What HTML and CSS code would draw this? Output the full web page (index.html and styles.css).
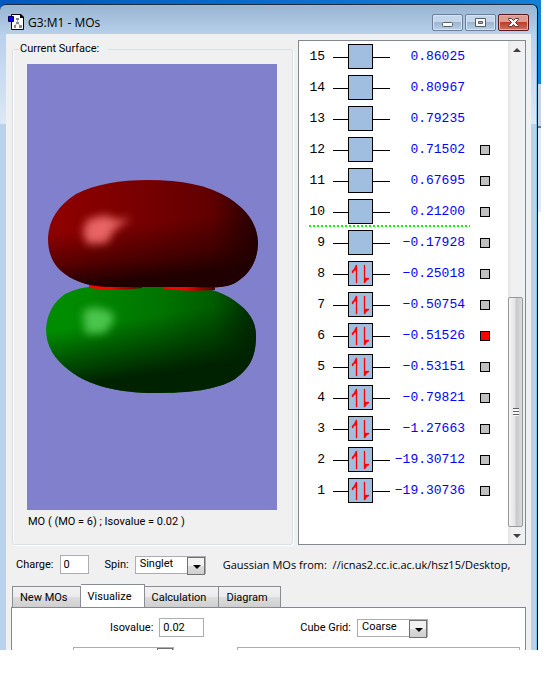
FILE: index.html
```
<!DOCTYPE html>
<html lang="en">
<head>
  <meta charset="UTF-8" />
  <meta name="viewport" content="width=device-width, initial-scale=1" />
  <title>G3:M1 - MOs</title>
  <link rel="stylesheet" href="styles.css">
</head>
<body>
  <div class="desktop">
    <main class="window">
      <header class="titlebar">
        <svg class="app-icon" width="16" height="16" viewBox="0 0 16 16" aria-hidden="true">
          <path d="M3.500.500h9l3 3v12h-12z" fill="#fff" stroke="#000"/>
          <path d="M12 0h1l3 3v1h-4z" fill="#000"/>
          <path d="M9.500 5v4l-3 3M9.500 9l3 3" stroke="#aaa" fill="none"/>
          <path d="M8 4h3v2H8zM8 8h3v2H8zM6 11h2v3H6zM11 11h3v3h-3z" fill="#888"/>
          <path d="M.5 2.500h5v5h-5z" fill="#00f" stroke="#000060"/>
        </svg>
        <h1>G3:M1 - MOs</h1>
        <div class="window-buttons">
          <button class="win-btn" aria-label="Minimize">
            <svg width="13" height="11" viewBox="0 0 13 11"><rect x="1.500" y="5.500" width="10" height="4" rx="1" fill="#fff" stroke="#555b68"/></svg>
          </button>
          <button class="win-btn" aria-label="Maximize">
            <svg width="13" height="11" viewBox="0 0 13 11"><path d="M1.500 1.500h10v8h-10zM4.500 4.500v2h4v-2z" fill="#fff" fill-rule="evenodd" stroke="#555b68"/></svg>
          </button>
          <button class="win-btn close" aria-label="Close">
            <svg width="13" height="11" viewBox="0 0 13 11"><path d="M1.500 1.500h3l2 2 2-2h3v1l-3 3 3 3v1h-3l-2-2-2 2h-3v-1l3-3-3-3z" fill="#fff" stroke="#5a3038"/></svg>
          </button>
        </div>
      </header>

      <div class="client">
        <div class="panels">
          <fieldset class="surface">
            <legend>Current Surface:</legend>
            <svg class="canvas" viewBox="0 0 250 446" preserveAspectRatio="none" role="img" aria-label="Molecular orbital 6">
              <defs>
                <path id="redLobe" d="M21 174c1-19 10-32 28-44 20-10 44-14 72-14 34 0 60 5 81 18 18 12 28 25 29 44 0 18-8 32-23 41-12 6-28 4-46 4H86c-20 0-36-4-48-13-11-8-17-19-17-36z"/>
                <path id="greenLobe" d="M19 265c1-16 8-27 19-35 18-9 40-9 60-8h55c22 0 42 5 55 15 14 10 21 20 21 35 0 24-9 34-21 43-18 11-46 14-79 14-40 0-68-8-86-22-16-12-24-25-24-42z"/>
                <linearGradient id="redBase">
                  <stop offset="0.1" stop-color="#8c0000"/>
                  <stop offset="0.5" stop-color="#740000"/>
                  <stop offset="0.78" stop-color="#600000"/>
                  <stop offset="1" stop-color="#240000"/>
                </linearGradient>
                <linearGradient id="redFoot" x1="0.4" y1="0" x2="0.6" y2="1">
                  <stop offset="0.4" stop-color="#200000" stop-opacity="0"/>
                  <stop offset="0.7" stop-color="#200000" stop-opacity="0.5"/>
                  <stop offset="0.9" stop-color="#200000"/>
                </linearGradient>
                <linearGradient id="greenBase">
                  <stop offset="0.1" stop-color="#008c00"/>
                  <stop offset="0.55" stop-color="#007400"/>
                  <stop offset="0.8" stop-color="#005c00"/>
                  <stop offset="1" stop-color="#002800"/>
                </linearGradient>
                <linearGradient id="greenFoot" x1="0.35" y1="0" x2="0.65" y2="1">
                  <stop offset="0.3" stop-color="#002200" stop-opacity="0"/>
                  <stop offset="0.6" stop-color="#002200" stop-opacity="0.6"/>
                  <stop offset="0.8" stop-color="#002200"/>
                </linearGradient>
                <linearGradient id="neck">
                  <stop offset="0.4" stop-color="#f00"/>
                  <stop offset="1" stop-color="#500000"/>
                </linearGradient>
                <filter id="soft" x="-40%" y="-40%" width="180%" height="180%">
                  <feGaussianBlur stdDeviation="4"/>
                </filter>
              </defs>
              <rect width="250" height="446" fill="#8080cc"/>
              <use href="#greenLobe" fill="url(#greenBase)"/>
              <use href="#greenLobe" fill="url(#greenFoot)"/>
              <path d="M56 247l12-4 17 5 2 8-9 13-19 1-2-10z" fill="#4cc44c" filter="url(#soft)"/>
              <path d="M62 220h53v4q-26 3-53 0z" fill="url(#neck)"/>
              <path d="M137 222h51v4q-26 2-51-1z" fill="url(#neck)"/>
              <use href="#redLobe" fill="url(#redBase)"/>
              <use href="#redLobe" fill="url(#redFoot)"/>
              <path d="M60 156l18-5 12 5 14-2-17 12-7 13-20 1-4-12z" fill="#e86464" filter="url(#soft)"/>
            </svg>
            <p class="caption">MO ( (MO = 6) ; Isovalue = 0.02 )</p>
          </fieldset>

          <div class="orbitals">
            <div class="levels" id="levels"></div>
            <div class="scrollbar">
              <button class="arrow up" aria-label="Scroll up"></button>
              <div class="track">
                <div class="thumb"><span class="grip"></span></div>
              </div>
              <button class="arrow down" aria-label="Scroll down"></button>
            </div>
          </div>
        </div>

        <div class="settings">
          <label for="charge">Charge:</label>
          <input id="charge" class="field charge" type="text" value="0">
          <label for="spin">Spin:</label>
          <span class="combo">
            <select id="spin"><option>Singlet</option><option>Triplet</option></select>
          </span>
          <span class="source">Gaussian MOs from:&nbsp; //icnas2.cc.ic.ac.uk/hsz15/Desktop,</span>
        </div>

        <nav class="tabs">
          <button class="tab">New MOs</button>
          <button class="tab active">Visualize</button>
          <button class="tab">Calculation</button>
          <button class="tab">Diagram</button>
        </nav>

        <section class="tab-page">
          <div class="options">
            <div class="option">
              <label for="isovalue">Isovalue:</label>
              <input id="isovalue" class="field isovalue" type="text" value="0.02">
            </div>
            <div class="option">
              <label for="grid">Cube Grid:</label>
              <span class="combo">
                <select id="grid"><option>Coarse</option><option>Medium</option><option>Fine</option></select>
              </span>
            </div>
          </div>
          <div class="next-row">
            <div class="cut-combo"><span></span></div>
            <div class="cut-box"></div>
          </div>
        </section>
      </div>
    </main>
    <div class="behind"></div>
  </div>

  <script src="script.js"></script>
</body>
</html>
```
FILE: styles.css
```
* {
  box-sizing: border-box;
}

body {
  margin: 0;
  background: #fff;
  color: #000;
  font-family: Roboto, "Liberation Sans", sans-serif;
  font-size: 11px;
}

button, input, select {
  font: inherit;
  color: inherit;
  margin: 0;
  padding: 0;
  border-radius: 0;
}

.desktop {
  display: flex;
  margin-right: 7px;
  padding-top: 4px;
  background: linear-gradient(90deg, #0058c0, #1480d8);
}

.window {
  flex: 1;
  min-width: 0;
  padding: 0 6px;
  border-top: 1px solid #1c2a3c;
  border-right: 1px solid #000;
  border-radius: 6px 6px 0 0;
  background: linear-gradient(#98b4d2, #b9d1ea 30px, #dce8f5 119px, #b9d1ea 119px);
  box-shadow: inset -1px 1px 0 #7cc8ec;
}

.titlebar {
  display: flex;
  align-items: center;
  height: 29px;
  padding: 6px 2px 0;
}

.app-icon {
  margin-bottom: 2px;
}

h1 {
  flex: 1;
  margin: 0 0 0 4px;
  font-family: "Open Sans", "Noto Sans", sans-serif;
  font-size: 12px;
  font-weight: 400;
  line-height: 16px;
}

.window-buttons {
  display: flex;
  gap: 2px;
}

.win-btn {
  display: flex;
  align-items: center;
  justify-content: center;
  width: 31px;
  height: 17px;
  border: 1px solid #6c7f9c;
  border-radius: 2px;
  background: linear-gradient(#c4d6ea 50%, #9db6d2 50%, #b8cfe6);
  box-shadow: inset 0 0 0 1px #d4e4f4;
}

.win-btn.close {
  border-color: #571a20;
  background: linear-gradient(#dd9c90 45%, #bc3f28 50%, #d0705c);
  box-shadow: inset 0 0 0 1px #e8b0a4;
}

.client {
  padding: 6px 5px 0;
  background: #f0f0f0;
}

.panels {
  display: flex;
  gap: 5px;
}

.surface {
  flex: 1;
  min-width: 0;
  margin: 1px 0 0 1px;
  padding: 7px 15px 0 14px;
  border: 1px solid #d5dfe5;
  border-radius: 3px;
  box-shadow: inset 1px 0 0 #fff, 1px 1px 0 #fff;
}

legend {
  margin-left: -8px;
  padding: 0 9px 0 1px;
  line-height: 16px;
}

.canvas {
  display: block;
  width: 100%;
  height: 446px;
}

.caption {
  margin: 0;
  padding: 4px 1px 14px;
  line-height: 16px;
}

.orbitals {
  display: flex;
  width: 228px;
  border: 1px solid #828790;
  background: #fff;
}

.levels {
  flex: 1;
}

.level {
  display: grid;
  grid-template-columns: 26px 65px 75px 25px;
  align-items: center;
  justify-items: end;
  height: 31px;
  font-family: "Liberation Mono", "Courier New", monospace;
  font-size: 13px;
}

.level.lumo {
  position: relative;
}

/* dotted line between the bound and the unbound orbitals */
.level.lumo::before {
  content: '';
  position: absolute;
  top: -2px;
  left: 10px;
  width: 161px;
  height: 2px;
  background: repeating-linear-gradient(90deg, #0f0 0 2px, transparent 2px 4px);
}

.level .energy {
  color: #00f;
}

.level .box {
  display: block;
}

.level input {
  appearance: none;
  width: 10px;
  height: 10px;
  border: 1px solid #000;
  background: #c0c0c0;
}

.level input:checked {
  background: #f00;
}

.scrollbar {
  display: flex;
  flex-direction: column;
  width: 17px;
  background: linear-gradient(90deg, #e6e6e6, #f0f0f0 4px);
}

.arrow {
  display: flex;
  align-items: center;
  justify-content: center;
  height: 17px;
  border: 0;
  background: none;
}

.arrow::before {
  content: '';
  border: 4px solid transparent;
}

.arrow.up::before {
  border-top: 0;
  border-bottom-color: #404040;
}

.arrow.down::before {
  border-bottom: 0;
  border-top-color: #404040;
}

.track {
  display: flex;
  flex: 1;
  align-items: flex-end;
}

.thumb {
  display: flex;
  align-items: center;
  justify-content: center;
  width: 15px;
  height: 49%;
  border: 1px solid #979797;
  border-radius: 2px;
  background: linear-gradient(90deg, #f5f5f5, #e4e4e6 45%, #c8c8ca 55%, #dcdcde);
}

.grip {
  width: 6px;
  height: 8px;
  background: repeating-linear-gradient(#606060 0 1px, #f8f8f8 1px 3px);
}

.settings {
  display: flex;
  align-items: center;
  height: 39px;
  padding: 0 5px;
}

.field {
  height: 19px;
  padding-left: 3px;
  border: 1px solid #abadb3;
  background: #fff;
}

.charge {
  width: 29px;
  margin: 0 16px 0 6px;
}

.combo {
  position: relative;
  display: inline-block;
  width: 71px;
  height: 18px;
  border: 1px solid #abadb3;
  background: #fff;
}

.combo select {
  display: block;
  width: 100%;
  height: 14px;
  padding-left: 4px;
  border: 0;
  background: none;
  appearance: none;
}

.combo::before {
  content: '';
  position: absolute;
  top: 0;
  right: 0;
  width: 16px;
  height: 16px;
  border: 1px solid #707070;
  background: linear-gradient(#f2f2f2 50%, #dcdcdc 50%, #cfcfcf);
  pointer-events: none;
}

.combo::after {
  content: '';
  position: absolute;
  top: 8px;
  right: 4px;
  border: 4px solid transparent;
  border-top-color: #000;
  border-bottom: 0;
  pointer-events: none;
}

.settings .combo {
  flex: none;
  margin: 0 17px 0 6px;
}

.source {
  flex: 1;
  overflow: hidden;
  font-family: "Open Sans", "Noto Sans", sans-serif;
  line-height: 16px;
  white-space: nowrap;
}

.tabs {
  display: flex;
  align-items: flex-end;
  height: 23px;
  padding-left: 1px;
}

.tab {
  height: 21px;
  padding: 0 12px 0 7px;
  border: 1px solid #898c95;
  border-bottom: 0;
  background: linear-gradient(#f2f2f2, #ebebeb 50%, #dddddd 50%, #cfcfcf);
}

.tab + .tab {
  border-left: 0;
}

.tab.active {
  height: 23px;
  background: #fff;
}

.tab-page {
  padding: 10px 5px 0;
  border: 1px solid #828790;
  border-bottom: 0;
  background: #fff;
}

.options {
  display: flex;
  justify-content: space-between;
  padding: 0 92px 0 93px;
}

.option {
  display: flex;
  align-items: center;
  gap: 6px;
}

.isovalue {
  width: 45px;
}

/* only the top edge of the next row of controls is in view */
.next-row {
  display: flex;
  gap: 63px;
  height: 3px;
  margin-top: 10px;
  padding-left: 56px;
  overflow: hidden;
}

.cut-combo {
  display: flex;
  justify-content: flex-end;
  width: 101px;
  border: 1px solid #abadb3;
  border-bottom: 0;
}

.cut-combo span {
  width: 16px;
  border: 1px solid #707070;
  border-bottom: 0;
}

.cut-box {
  flex: 1;
  border: 1px solid #abadb3;
  border-bottom: 0;
}

.behind {
  width: 3px;
  margin-top: 80px;
  background: linear-gradient(#c8d4e4 42px, #707888 42px 44px, #e0e8f2 44px 128px, #fff 128px);
}
```
FILE: script.js
```
const energies = [
  [15, '0.86025'], [14, '0.80967'], [13, '0.79235'], [12, '0.71502'],
  [11, '0.67695'], [10, '0.21200'], [9, '−0.17928'], [8, '−0.25018'],
  [7, '−0.50754'], [6, '−0.51526'], [5, '−0.53151'], [4, '−0.79821'],
  [3, '−1.27663'], [2, '−19.30712'], [1, '−19.30736']
];

function box(occupied) {
  let svg = '<svg class="box" width="57" height="25" viewBox="0 0 57 25">' +
    '<path d="M0 13.500h57" stroke="#000"/>' +
    '<rect x="15.500" y=".5" width="24" height="24" fill="#a0bee0" stroke="#000"/>';
  if (occupied) {
    // spin up and spin down electrons
    svg += '<path d="M23 4h1v18h-1V9l-2 1-1 2h-1v-2l2-2zM31 4h1v13h4v1l-2 1-2 3h-1z" fill="#f00" stroke="#f00" stroke-width=".3"/>';
  }
  return svg + '</svg>';
}

document.getElementById('levels').innerHTML = energies.map(([n, e]) => `
  <div class="level${n === 9 ? ' lumo' : ''}">
    <span class="number">${n}</span>
    ${box(n < 9)}
    <span class="energy">${e}</span>
    ${n < 13 ? `<input type="checkbox" aria-label="MO ${n}"${n === 6 ? ' checked' : ''}>` : ''}
  </div>`).join('');
```
